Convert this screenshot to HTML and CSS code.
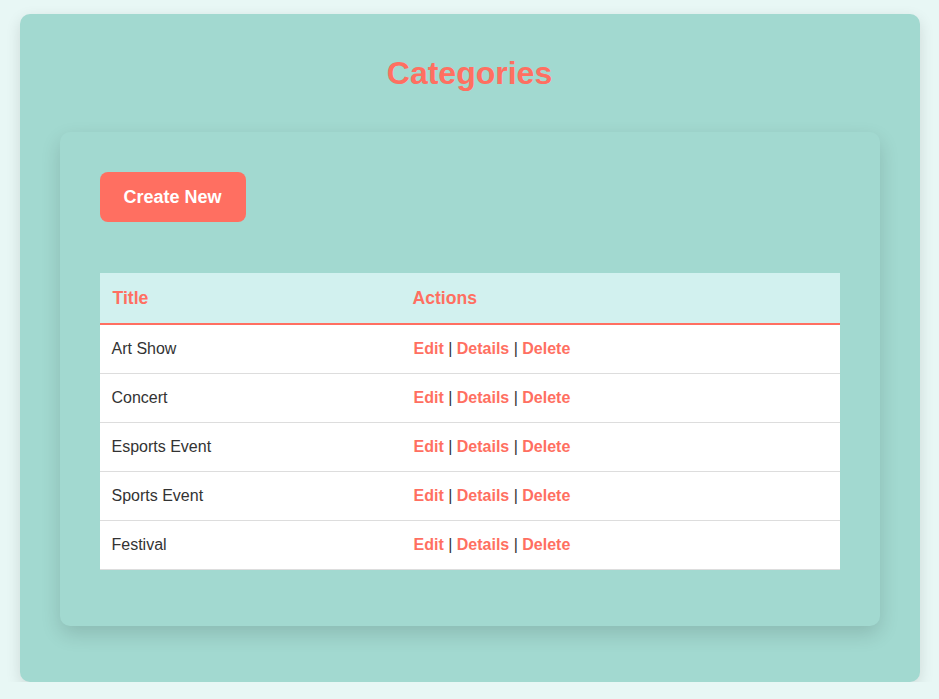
FILE: index.html
```html
<!DOCTYPE html>
<html lang="en">
<head>
<meta charset="utf-8">
<title>Categories</title>
<link rel="stylesheet" href="styles.css">
</head>
<body>
<div class="container">
  <h1 class="page-title">Categories</h1>
  <div class="card">
    <a class="btn-create" href="#">Create New</a>
    <table class="table">
      <thead>
        <tr><th class="col-title">Title</th><th>Actions</th></tr>
      </thead>
      <tbody>
        <tr><td>Art Show</td><td class="actions"><a href="#">Edit</a> | <a href="#">Details</a> | <a href="#">Delete</a></td></tr>
        <tr><td>Concert</td><td class="actions"><a href="#">Edit</a> | <a href="#">Details</a> | <a href="#">Delete</a></td></tr>
        <tr><td>Esports Event</td><td class="actions"><a href="#">Edit</a> | <a href="#">Details</a> | <a href="#">Delete</a></td></tr>
        <tr><td>Sports Event</td><td class="actions"><a href="#">Edit</a> | <a href="#">Details</a> | <a href="#">Delete</a></td></tr>
        <tr><td>Festival</td><td class="actions"><a href="#">Edit</a> | <a href="#">Details</a> | <a href="#">Delete</a></td></tr>
      </tbody>
    </table>
  </div>
</div>
</body>
</html>
```
FILE: styles.css
```css
html, body {
  margin: 0;
  padding: 0;
}
body {
  background: #e8f7f5;
  font-family: "Liberation Sans", Arial, sans-serif;
  color: #333;
  padding-top: 14px;
}
.container {
  width: 900px;
  margin: 0 auto;
  box-sizing: border-box;
  background: #a2d9d0;
  border-radius: 10px;
  box-shadow: 0 5px 15px rgba(0, 0, 0, 0.12);
  padding: 38px 40px 56px;
  height: 668px;
}
.page-title {
  margin: 0 0 38px;
  text-align: center;
  color: #ff6f61;
  font-size: 32px;
  line-height: 42px;
  font-weight: bold;
}
.card {
  background: #a2d9d0;
  border-radius: 10px;
  box-shadow: 0 8px 20px rgba(0, 0, 0, 0.14);
  padding: 40px 40px 56px;
  display: flex;
  flex-direction: column;
  align-items: flex-start;
}
.btn-create {
  display: inline-block;
  width: 146px;
  height: 50px;
  line-height: 50px;
  text-align: center;
  background: #ff6f61;
  color: #fff;
  font-weight: bold;
  font-size: 18px;
  text-decoration: none;
  border-radius: 8px;
  margin-bottom: 51px;
}
.table {
  width: 740px;
  border-collapse: collapse;
  background: #fff;
}
.table th {
  background: #d2f1ef;
  color: #ff6f61;
  font-weight: bold;
  font-size: 17.6px;
  text-align: left;
  height: 50px;
  padding: 0 12px 0 13px;
  border-bottom: 2px solid #ff6f61;
}
.table th.col-title {
  width: 300px;
  box-sizing: border-box;
}
.table td {
  font-size: 16px;
  color: #333;
  height: 48px;
  padding: 0 12px;
  border-bottom: 1px solid #ddd;
}
.table td.actions {
  padding-left: 14px;
}
.table td a {
  color: #ff6f61;
  font-weight: bold;
  text-decoration: none;
}
```
